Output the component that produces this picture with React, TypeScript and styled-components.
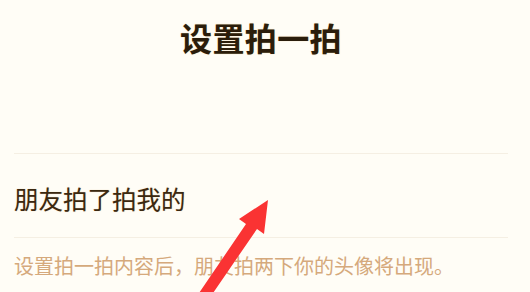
import React from 'react';
import styled, { createGlobalStyle } from 'styled-components';

const GlobalStyle = createGlobalStyle`
  html, body {
    margin: 0;
    padding: 0;
    background: #fffdf6;
  }
  body {
    font-family: "Noto Sans CJK SC", "Noto Sans", sans-serif;
    overflow: hidden;
  }
`;

const Page = styled.div`
  position: relative;
  width: 530px;
  height: 292px;
  padding: 0 22px 0 14px;
  box-sizing: border-box;
  background: #fffdf6;
  overflow: hidden;
`;

const Header = styled.header`
  padding-top: 21px;
  text-align: center;
`;

const Title = styled.h1`
  margin: 0;
  font-size: 32px;
  line-height: 32px;
  font-weight: 700;
  letter-spacing: 0.4px;
  color: #2b1d0b;
  text-shadow: 0 0 1px rgba(214, 150, 60, 0.6);
`;

const List = styled.div`
  margin-top: 100px;
  border-top: 1px solid #f5efe3;
`;

const Row = styled.div`
  height: 84px;
  padding-top: 6px;
  box-sizing: border-box;
  display: flex;
  align-items: center;
  border-bottom: 1px solid #f5efe3;
`;

const RowText = styled.span`
  font-size: 24.5px;
  line-height: 24px;
  font-weight: 400;
  color: #3b2810;
  text-shadow: 0 0 1px rgba(200, 140, 60, 0.5);
`;

const Hint = styled.p`
  margin: 0;
  padding-top: 18px;
  font-size: 20px;
  line-height: 20px;
  color: #d5a97c;
`;

const Arrow = styled.svg`
  position: absolute;
  left: 0;
  top: 0;
  pointer-events: none;
`;

const App: React.FC = () => {
  return (
    <>
      <GlobalStyle />
      <Page>
        <Header>
          <Title>设置拍一拍</Title>
        </Header>
        <List>
          <Row>
            <RowText>朋友拍了拍我的</RowText>
          </Row>
        </List>
        <Hint>设置拍一拍内容后，朋友拍两下你的头像将出现。</Hint>
        <Arrow width="530" height="292" viewBox="0 0 530 292">
          <polygon
            points="197,296 246,224 239,219 268,200 264,234 257,229 211,296"
            fill="#fa3333"
          />
        </Arrow>
      </Page>
    </>
  );
};

export default App;
